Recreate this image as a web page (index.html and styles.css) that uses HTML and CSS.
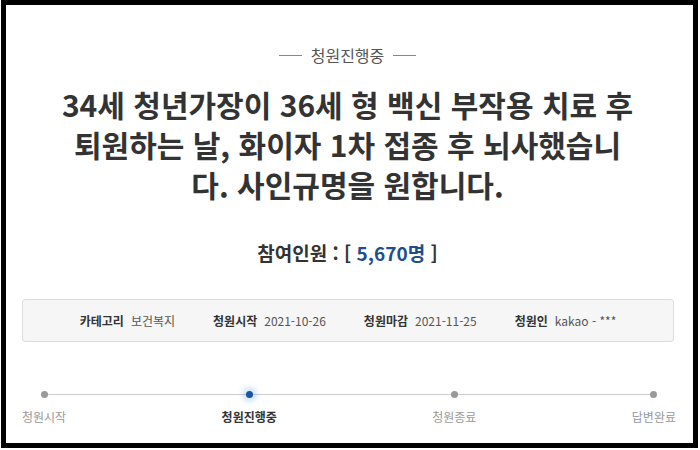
FILE: index.html
```html
<!DOCTYPE html>
<html lang="ko">
<head>
<meta charset="utf-8">
<link rel="stylesheet" href="styles.css">
</head>
<body>
<div class="frame">
  <div class="status"><span class="dash"></span><span class="status-text">청원진행중</span><span class="dash"></span></div>
  <h1 class="title">34세 청년가장이 36세 형 백신 부작용 치료 후<br>퇴원하는 날, 화이자 1차 접종 후 뇌사했습니<br>다. 사인규명을 원합니다.</h1>
  <div class="count">참여인원 : [ <span class="num">5,670명</span> ]</div>
  <div class="info">
    <div class="item"><span class="label">카테고리</span><span class="value">보건복지</span></div>
    <div class="item"><span class="label">청원시작</span><span class="value">2021-10-26</span></div>
    <div class="item"><span class="label">청원마감</span><span class="value">2021-11-25</span></div>
    <div class="item"><span class="label">청원인</span><span class="value">kakao - ***</span></div>
  </div>
  <div class="steps">
    <div class="step"><span class="dot"></span><span class="step-label">청원시작</span></div>
    <div class="step active"><span class="dot"></span><span class="step-label">청원진행중</span></div>
    <div class="step"><span class="dot"></span><span class="step-label">청원종료</span></div>
    <div class="step"><span class="dot"></span><span class="step-label">답변완료</span></div>
  </div>
</div>
</body>
</html>
```
FILE: styles.css
```css
* { box-sizing: border-box; }
html, body { margin: 0; padding: 0; background: #fff; }
body { font-family: "Noto Sans CJK KR", "Noto Sans", sans-serif; color: #333; }
.frame {
  width: 697px;
  height: 448px;
  margin-left: 1px;
  border: 5px solid #000;
  background: #fff;
  padding-top: 40px;
  display: flex;
  flex-direction: column;
}
.status {
  display: flex;
  justify-content: center;
  align-items: center;
  gap: 9px;
  height: 20px;
  font-size: 16px;
  line-height: 20px;
  color: #555;
  margin-right: 4px;
}
.dash { width: 23px; height: 1px; background: #888; }
.title {
  margin: 19px 0 0 0;
  text-align: center;
  font-size: 30px;
  font-weight: 700;
  line-height: 40px;
  letter-spacing: 0;
  color: #333;
  margin-right: 4px;
}
.count {
  margin-top: 36px;
  text-align: center;
  font-size: 19px;
  font-weight: 700;
  line-height: 26px;
  color: #333;
  margin-right: 4px;
}
.num { color: #1f4e8c; }
.info {
  margin: 33px 19px 0 16px;
  height: 43px;
  background: #f6f6f6;
  border: 1px solid #ddd;
  border-radius: 3px;
  display: flex;
  justify-content: center;
  align-items: center;
  gap: 38px;
  font-size: 12px;
}
.item { display: flex; gap: 7px; }
.label { font-weight: 700; color: #333; }
.value { color: #555; }
.steps {
  position: relative;
  margin: 49px 17px 0 16px;
  display: flex;
  justify-content: space-between;
}
.steps::before {
  content: "";
  position: absolute;
  left: 22px;
  right: 22px;
  top: 3px;
  height: 1px;
  background: #ccc;
}
.step {
  position: relative;
  display: flex;
  flex-direction: column;
  align-items: center;
  gap: 10px;
}
.dot {
  width: 7px;
  height: 7px;
  border-radius: 50%;
  background: #999;
}
.step.active .dot {
  background: #1a56a0;
  box-shadow: 0 0 5px 4px rgba(80, 150, 230, 0.25);
}
.step-label {
  font-size: 12px;
  line-height: 18px;
  color: #999;
}
.step.active .step-label { color: #333; font-weight: 700; }
```
